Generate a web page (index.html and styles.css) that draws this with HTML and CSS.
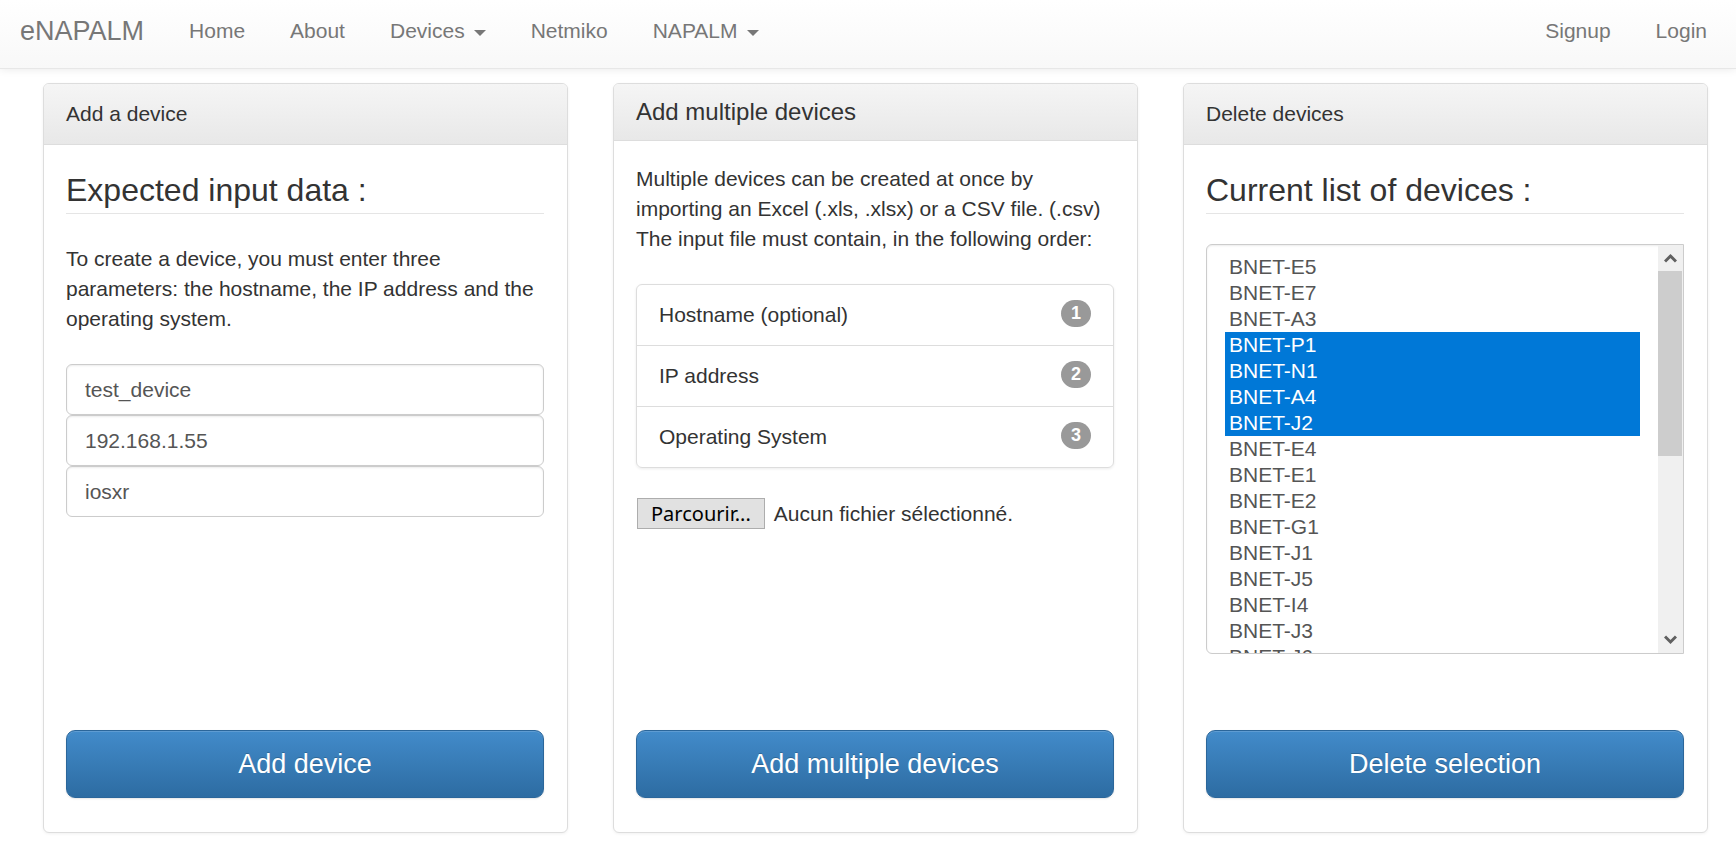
FILE: index.html
```html
<!DOCTYPE html>
<html lang="en">
<head>
<meta charset="utf-8">
<meta name="viewport" content="width=device-width, initial-scale=1">
<title>eNAPALM</title>
<link rel="stylesheet" href="styles.css">
</head>
<body>
<nav class="navbar">
  <a class="navbar-brand" href="#">eNAPALM</a>
  <ul class="nav">
    <li><a href="#">Home</a></li>
    <li><a href="#">About</a></li>
    <li><a href="#">Devices <span class="caret"></span></a></li>
    <li><a href="#">Netmiko</a></li>
    <li><a href="#">NAPALM <span class="caret"></span></a></li>
  </ul>
  <ul class="nav nav-right">
    <li><a href="#">Signup</a></li>
    <li><a href="#">Login</a></li>
  </ul>
</nav>
<main class="columns">
  <form class="panel">
    <div class="panel-heading">Add a device</div>
    <div class="panel-body">
      <h2 class="page-header">Expected input data :</h2>
      <p class="text">To create a device, you must enter three parameters: the hostname, the IP address and the operating system.</p>
      <div class="fields">
        <input class="form-control" type="text" aria-label="Hostname" value="test_device">
        <input class="form-control" type="text" aria-label="IP address" value="192.168.1.55">
        <input class="form-control" type="text" aria-label="Operating system" value="iosxr">
      </div>
      <button class="btn" type="button">Add device</button>
    </div>
  </form>
  <form class="panel">
    <div class="panel-heading"><h3 class="panel-title">Add multiple devices</h3></div>
    <div class="panel-body">
      <p class="text">Multiple devices can be created at once by importing an Excel (.xls, .xlsx) or a CSV file. (.csv)<br>The input file must contain, in the following order:</p>
      <ul class="list-group">
        <li>Hostname (optional)<span class="badge">1</span></li>
        <li>IP address<span class="badge">2</span></li>
        <li>Operating System<span class="badge">3</span></li>
      </ul>
      <label class="file">
        <input class="file-input" type="file">
        <span class="file-button">Parcourir...</span>
        <span>Aucun fichier sélectionné.</span>
      </label>
      <button class="btn" type="button">Add multiple devices</button>
    </div>
  </form>
  <form class="panel">
    <div class="panel-heading">Delete devices</div>
    <div class="panel-body">
      <h2 class="page-header">Current list of devices :</h2>
      <div class="device-box">
        <select class="device-list" multiple aria-label="Devices">
          <option>BNET-E5</option>
          <option>BNET-E7</option>
          <option>BNET-A3</option>
          <option selected>BNET-P1</option>
          <option selected>BNET-N1</option>
          <option selected>BNET-A4</option>
          <option selected>BNET-J2</option>
          <option>BNET-E4</option>
          <option>BNET-E1</option>
          <option>BNET-E2</option>
          <option>BNET-G1</option>
          <option>BNET-J1</option>
          <option>BNET-J5</option>
          <option>BNET-I4</option>
          <option>BNET-J3</option>
          <option>BNET-J6</option>
          <option>BNET-A1</option>
          <option>BNET-A2</option>
          <option>BNET-E3</option>
          <option>BNET-E6</option>
          <option>BNET-G2</option>
          <option>BNET-G3</option>
          <option>BNET-I1</option>
          <option>BNET-I2</option>
          <option>BNET-I3</option>
          <option>BNET-J4</option>
          <option>BNET-N2</option>
          <option>BNET-N3</option>
          <option>BNET-P2</option>
        </select>
        <div class="scrollbar" aria-hidden="true">
          <svg class="scroll-arrow" width="13" height="11" viewBox="0 0 13 11"><path d="M1 8.500 6.500 3 12 8.500" fill="none" stroke="#606060" stroke-width="3"/></svg>
          <div class="scroll-track"><div class="scroll-thumb"></div></div>
          <svg class="scroll-arrow" width="13" height="11" viewBox="0 0 13 11"><path d="M1 2.500 6.500 8 12 2.500" fill="none" stroke="#606060" stroke-width="3"/></svg>
        </div>
      </div>
      <button class="btn" type="button">Delete selection</button>
    </div>
  </form>
</main>
</body>
</html>
```
FILE: styles.css
```css
* {
  box-sizing: border-box;
}

body {
  margin: 0;
  background: #fff;
  color: #333;
  font: 21px/30px "Liberation Sans", Arial, sans-serif;
}

h2, h3, p, ul {
  margin: 0;
  padding: 0;
  font-weight: 400;
}

ul {
  list-style: none;
}

/* Navigation bar */
.navbar {
  display: flex;
  align-items: flex-start;
  padding: 16px 7px 22px 20px;
  background: linear-gradient(#fff, #f8f8f8);
  border-bottom: 1px solid #e7e7e7;
  box-shadow: 0 1px 8px rgba(0, 0, 0, .08);
}

.navbar a {
  color: #777;
  text-decoration: none;
  text-shadow: 0 1px 0 rgba(255, 255, 255, .25);
}

.navbar-brand {
  margin-right: 22px;
  font-size: 27px;
}

.nav {
  display: flex;
}

.nav a {
  display: flex;
  align-items: center;
  gap: 9px;
  padding: 0 22px 0 23px;
}

.nav-right {
  margin-left: auto;
}

.caret {
  margin-top: 3px;
  border-top: 6px solid #777;
  border-left: 6px solid transparent;
  border-right: 6px solid transparent;
}

/* Panels */
.columns {
  display: grid;
  grid-template-columns: repeat(3, minmax(0, 1fr));
  gap: 45px;
  padding: 14px 28px 20px 43px;
}

.panel {
  display: flex;
  flex-direction: column;
  background: #fff;
  border: 1px solid #ddd;
  border-radius: 6px;
  box-shadow: 0 1px 3px rgba(0, 0, 0, .06);
}

.panel-heading {
  padding: 15px 22px;
  background: linear-gradient(#f5f5f5, #e8e8e8);
  border-bottom: 1px solid #ddd;
  border-radius: 5px 5px 0 0;
}

.panel-title {
  font-size: 24px;
  line-height: 26px;
}

.panel-body {
  display: flex;
  flex: 1;
  flex-direction: column;
  padding: 23px 23px 34px 22px;
}

.page-header {
  margin-bottom: 30px;
  padding: 5px 0;
  border-bottom: 1px solid #e5e5e5;
  font-size: 32px;
  line-height: 35px;
}

.text {
  margin-bottom: 30px;
}

.fields {
  display: flex;
  flex-direction: column;
}

.form-control {
  width: 100%;
  height: 51px;
  padding: 9px 18px;
  border: 1px solid #ccc;
  border-radius: 6px;
  background: #fff;
  color: #555;
  font: inherit;
  box-shadow: inset 0 1px 2px rgba(0, 0, 0, .08);
}

.list-group {
  border: 1px solid #ddd;
  border-radius: 6px;
  box-shadow: 0 1px 3px rgba(0, 0, 0, .08);
}

.list-group li {
  display: flex;
  align-items: flex-start;
  justify-content: space-between;
  padding: 15px 22px;
}

.list-group li + li {
  border-top: 1px solid #ddd;
}

.badge {
  padding: 4px 10px 5px;
  border-radius: 14px;
  background: #999;
  color: #fff;
  font-size: 18px;
  font-weight: 700;
  line-height: 18px;
}

.file {
  display: flex;
  align-items: center;
  gap: 9px;
  margin-top: 30px;
}

.file-input {
  position: absolute;
  width: 1px;
  height: 1px;
  opacity: 0;
}

.file-button {
  margin-left: 1px;
  padding: 0 13px;
  border: 1px solid #adadad;
  background: #e1e1e1;
  color: #000;
  font: 20px/29px "Noto Sans", "Open Sans", sans-serif;
}

/* Device list with its scrollbar */
.device-box {
  display: flex;
  height: 410px;
  margin-bottom: 76px;
  border: 1px solid #ccc;
  border-radius: 6px 0 0 6px;
  box-shadow: inset 0 1px 2px rgba(0, 0, 0, .08);
}

.device-list {
  flex: 1;
  min-width: 0;
  height: 100%;
  padding: 9px 18px;
  border: 0;
  outline: 0;
  background: transparent;
  color: #555;
  font: inherit;
  scrollbar-width: none;
}

.device-list option {
  min-height: 26px;
  padding: 1px 4px 0;
  line-height: 25px;
}

.device-list option:checked {
  background: #0078d7 linear-gradient(#0078d7, #0078d7);
  color: #fff;
}

.scrollbar {
  display: flex;
  flex-direction: column;
  align-items: center;
  width: 25px;
  padding: 8px 0;
  background: #f0f0f0;
}

.scroll-arrow {
  flex: none;
}

.scroll-track {
  flex: 1;
  align-self: stretch;
  margin: 7px 1px 7px 0;
}

.scroll-thumb {
  height: 52%;
  background: #cdcdcd;
}

.btn {
  width: 100%;
  height: 68px;
  margin-top: auto;
  padding: 0 24px;
  border: 1px solid #2b669a;
  border-radius: 9px;
  background: linear-gradient(#428bca, #2d6ca2);
  color: #fff;
  font: 27px/36px "Liberation Sans", Arial, sans-serif;
  text-shadow: 0 -1px 0 rgba(0, 0, 0, .2);
  box-shadow: inset 0 1px 0 rgba(255, 255, 255, .15), 0 1px 2px rgba(0, 0, 0, .1);
}

@media (max-width: 1100px) {
  .navbar {
    flex-wrap: wrap;
  }

  .columns {
    grid-template-columns: minmax(0, 1fr);
  }

  .btn {
    margin-top: 30px;
  }
}
```
